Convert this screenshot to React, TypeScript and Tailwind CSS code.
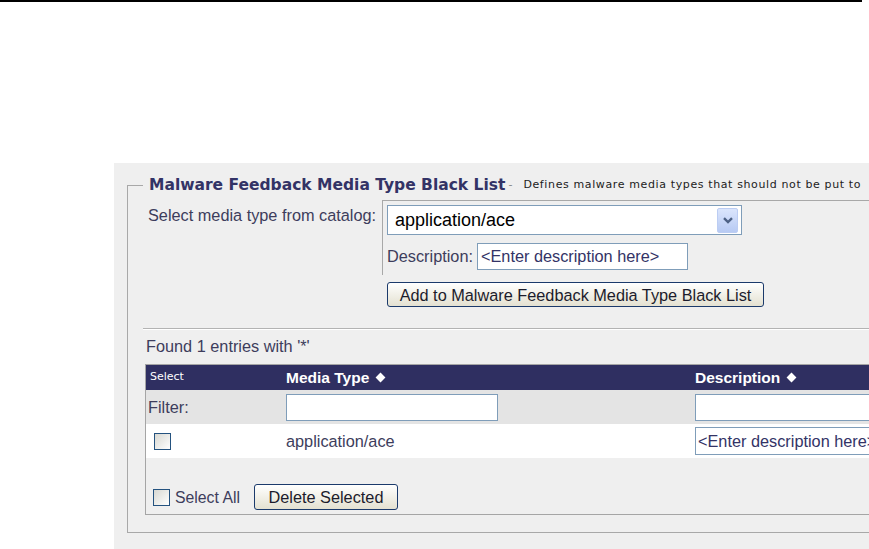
import { useState } from 'react'

const arial = "font-['Liberation_Sans',Arial,sans-serif]"
const verdana = "font-['DejaVu_Sans',Verdana,sans-serif]"

function Checkbox({ checked, onChange }: { checked: boolean; onChange: () => void }) {
  return (
    <button
      type="button"
      onClick={onChange}
      className="flex h-[17px] w-[17px] shrink-0 items-center justify-center border border-[#24527f] bg-gradient-to-br from-[#d8d8d2] to-white"
    >
      {checked && (
        <svg viewBox="0 0 10 10" className="h-[10px] w-[10px]">
          <path d="M1.5 5 L4 7.5 L8.5 2" fill="none" stroke="#21a121" strokeWidth="2" />
        </svg>
      )}
    </button>
  )
}

function Diamond() {
  return <span className="ml-[8px] inline-block h-[7px] w-[7px] rotate-45 bg-white" />
}

export default function App() {
  const [media, setMedia] = useState('application/ace')
  const [checked, setChecked] = useState(false)

  return (
    <div className={`relative h-[549px] w-[869px] overflow-hidden bg-white text-[#3d3d5c] ${arial}`}>
      {/* page rule */}
      <div className="h-[2px] w-[862px] bg-black" />

      <div className="ml-[114px] mt-[161px] h-[386px] w-[900px] bg-[#efefef] pl-[13px] pt-[12px]">
        {/* legend */}
        <div className="flex h-[21px] items-center whitespace-nowrap">
          <span className="h-px w-[16px] bg-[#a8a8a8]" />
          <span className={`ml-[6px] text-[15.5px] font-bold text-[#333366] ${verdana}`}>
            Malware Feedback Media Type Black List
          </span>
          <span className={`ml-[3px] text-[11px] text-[#888] ${verdana}`}>-</span>
          <span className={`ml-[11px] text-[11px] tracking-[0.62px] text-[#222] ${verdana}`}>
            Defines malware media types that should not be put to
          </span>
        </div>

        <div className="-mt-[11px] border-b border-l border-[#a8a8a8] pb-[17px] pl-[15px] pt-[15px]">
          {/* catalog picker */}
          <div className="flex">
            <div className="w-[239px] shrink-0 pl-[5px] pt-[6px] text-[16.3px] leading-[18px]">
              Select media type from catalog:
            </div>
            <div className="flex-1">
              <div className="border-l border-t border-[#a8a8a8] pb-[5px] pl-[4px] pt-[4px]">
                <div className="flex h-[30px] w-[355px] items-center border border-[#7f9db9] bg-white">
                  <span className="flex-1 pl-[7px] text-[18px] text-black">{media}</span>
                  <button
                    type="button"
                    onClick={() => setMedia('application/ace')}
                    className="mr-[3px] flex h-[25px] w-[21px] items-center justify-center rounded-[2px] border border-[#bccdf3] bg-gradient-to-b from-[#dbe5fc] to-[#b7caf3]"
                  >
                    <svg viewBox="0 0 10 7" className="h-[7px] w-[10px]">
                      <path d="M1 1.2 L5 5 L9 1.2" fill="none" stroke="#4d6185" strokeWidth="2.4" />
                    </svg>
                  </button>
                </div>
                <div className="mt-[8px] flex items-center">
                  <span className="text-[16.3px]">Description:</span>
                  <div className="ml-[4px] flex h-[27px] w-[211px] items-center border border-[#7f9db9] bg-white pl-[3px] text-[16.3px] text-[#333366]">
                    &lt;Enter description here&gt;
                  </div>
                </div>
              </div>
              <button
                type="button"
                className="ml-[5px] mt-[7px] h-[25px] w-[377px] rounded-[3px] border border-[#1b3a6b] bg-gradient-to-b from-white to-[#e4e1d1] text-[16.3px] text-[#1c1c2c]"
              >
                Add to Malware Feedback Media Type Black List
              </button>
            </div>
          </div>

          <div className="mt-[20px] border-b border-t border-b-white border-t-[#b3b3b3]" />

          <div className="mt-[7px] pl-[3px] text-[16.3px] leading-[18px]">Found 1 entries with '*'</div>

          {/* results table */}
          <div className="ml-[2px] mt-[9px] border-b border-l border-t border-[#a5a5a5]">
            <div className="flex h-[25px] items-center bg-[#2f2f61] text-white">
              <div className={`w-[140px] shrink-0 pl-[4px] text-[11px] ${verdana}`}>Select</div>
              <div className="flex w-[409px] shrink-0 items-center text-[15.5px] font-bold">
                Media Type
                <Diamond />
              </div>
              <div className="flex items-center text-[15.5px] font-bold">
                Description
                <Diamond />
              </div>
            </div>

            <div className="flex h-[34px] items-center bg-[#e4e4e4]">
              <div className="w-[140px] shrink-0 pl-[2px] text-[16.3px]">Filter:</div>
              <div className="w-[409px] shrink-0">
                <div className="h-[27px] w-[212px] border border-[#7f9db9] bg-white" />
              </div>
              <div className="h-[27px] w-[240px] border border-[#7f9db9] bg-white" />
            </div>

            <div className="flex h-[34px] items-center bg-white">
              <div className="w-[140px] shrink-0 pl-[8px]">
                <Checkbox checked={checked} onChange={() => setChecked(!checked)} />
              </div>
              <div className="w-[409px] shrink-0 text-[16.3px]">application/ace</div>
              <div className="flex h-[28px] w-[240px] items-center overflow-hidden whitespace-nowrap border border-[#7f9db9] bg-white pl-[2px] text-[16.3px] text-[#333366]">
                &lt;Enter description here&gt;
              </div>
            </div>

            <div className="flex items-start pb-[4px] pl-[7px] pt-[26px]">
              <div className="mt-[2px] flex items-center">
                <Checkbox checked={checked} onChange={() => setChecked(!checked)} />
                <span className="ml-[5px] text-[15.8px]">Select All</span>
              </div>
              <button
                type="button"
                className="ml-[14px] h-[26px] w-[144px] rounded-[3px] border border-[#1b3a6b] bg-gradient-to-b from-white to-[#e4e1d1] text-[16.3px] text-[#1c1c2c]"
              >
                Delete Selected
              </button>
            </div>
          </div>
        </div>
      </div>
    </div>
  )
}
